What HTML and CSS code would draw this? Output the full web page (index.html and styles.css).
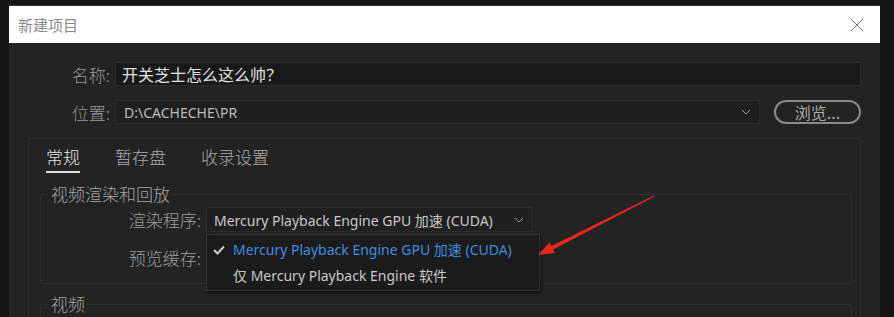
FILE: index.html
```html
<!DOCTYPE html>
<html lang="zh-CN">
<head>
    <meta charset="UTF-8">
    <title>新建项目</title>
    <link rel="stylesheet" href="styles.css">
</head>
<body>
    <div class="dialog">
        <div class="title-bar">
            <span class="title">新建项目</span>
            <svg class="close" width="14" height="14" viewBox="0 0 14 14">
                <path d="M1 1 L13 13 M13 1 L1 13" stroke="#777" stroke-width="1" fill="none"/>
            </svg>
        </div>

        <div class="content">
            <div class="row">
                <label class="label">名称:</label>
                <div class="text-input">开关芝士怎么这么帅？</div>
            </div>
            <div class="row">
                <label class="label">位置:</label>
                <div class="select path-select">
                    <span>D:\CACHECHE\PR</span>
                    <svg class="chev" width="10" height="6" viewBox="0 0 10 6"><path d="M1 1 L5 5 L9 1" stroke="#999" fill="none"/></svg>
                </div>
                <button class="browse">浏览...</button>
            </div>

            <div class="panel">
                <div class="tabs">
                    <span class="tab active">常规</span>
                    <span class="tab">暂存盘</span>
                    <span class="tab">收录设置</span>
                </div>

                <fieldset class="group">
                    <legend>视频渲染和回放</legend>
                    <div class="group-row">
                        <span class="group-label">渲染程序:</span>
                        <div class="select renderer">
                            <span>Mercury Playback Engine GPU 加速 (CUDA)</span>
                            <svg class="chev" width="10" height="6" viewBox="0 0 10 6"><path d="M1 1 L5 5 L9 1" stroke="#999" fill="none"/></svg>
                        </div>
                        <div class="menu">
                            <div class="menu-item selected">
                                <svg class="check" width="12" height="10" viewBox="0 0 12 10"><path d="M1 5 L4.5 8.5 L11 1.5" stroke="#ccc" stroke-width="2" fill="none"/></svg>
                                <span>Mercury Playback Engine GPU 加速 (CUDA)</span>
                            </div>
                            <div class="menu-item">
                                <span>仅 Mercury Playback Engine 软件</span>
                            </div>
                        </div>
                    </div>
                    <div class="group-row">
                        <span class="group-label">预览缓存:</span>
                    </div>
                </fieldset>

                <fieldset class="group">
                    <legend>视频</legend>
                </fieldset>
            </div>
        </div>

        <!-- 红色箭头标注 -->
        <svg class="arrow" width="140" height="75" viewBox="0 0 140 75">
            <path d="M11 68 L22.6 55.5 L24.4 59 L127 8.6 L127.4 9.4 L26.2 62.6 L28 66.1 Z" fill="#e8261c"/>
        </svg>
    </div>
</body>
</html>
```

FILE: styles.css
```css
body {
    margin: 0;
    background-color: #151515;
    font-family: "Noto Sans", "Noto Sans CJK SC", sans-serif;
    overflow: hidden;
}

.dialog {
    position: relative;
    margin-left: 9px;
    margin-top: 5px;
    width: 871px;
    height: 311px;
    overflow: hidden;
    background-color: #232323;
    border-top: 1px solid #333;
}

.title-bar {
    height: 37px;
    background-color: #fff;
    display: flex;
    align-items: center;
    justify-content: space-between;
    padding: 0 16px 0 9px;
}

.title {
    color: #8a8a8a;
    font-size: 15px;
    font-family: "Noto Sans CJK SC", sans-serif;
}

.content {
    padding: 19px 19px 0 0;
}

.row {
    display: flex;
    align-items: center;
    gap: 5px;
    height: 24px;
    margin-bottom: 14px;
}

.label {
    width: 101px;
    text-align: right;
    color: #979797;
    font-size: 17px;
    font-family: "Noto Sans CJK SC", sans-serif;
    font-weight: 300;
}

.text-input {
    flex: 1;
    height: 22px;
    line-height: 22px;
    background-color: #191919;
    border: 1px solid #2c2c2c;
    color: #e0e0e0;
    font-size: 16px;
    padding-left: 6px;
    font-family: "Noto Sans CJK SC", sans-serif;
}

.select {
    display: flex;
    align-items: center;
    justify-content: space-between;
    background-color: #1f1f1f;
    border: 1px solid #2c2c2c;
    color: #c8c8c8;
    font-size: 14px;
    padding: 0 8px 0 8px;
    box-sizing: border-box;
}

.path-select {
    width: 645px;
    height: 24px;
    color: #bbb;
}

.browse {
    margin-left: 9px;
    width: 87px;
    height: 24px;
    border: 2px solid #8a8a8a;
    border-radius: 12px;
    background-color: #232323;
    color: #a8a8a8;
    font-size: 16px;
    font-family: "Noto Sans CJK SC", sans-serif;
    padding: 0;
    line-height: 18px;
}

.panel {
    margin-left: 19px;
    border: 1px solid #2e2e2e;
    border-bottom: none;
    height: 200px;
    padding: 0 8px 0 11px;
}

.tabs {
    display: flex;
    gap: 35px;
    padding: 6px 0 0 6px;
    height: 40px;
    box-sizing: border-box;
}

.tab {
    color: #aaa;
    font-size: 17px;
    font-family: "Noto Sans CJK SC", sans-serif;
    font-weight: 300;
    line-height: 24px;
    height: 26px;
}

.tab.active {
    color: #e6e6e6;
    border-bottom: 2px solid #ddd;
}

.group {
    border: 1px solid #2f2f2f;
    border-radius: 3px;
    margin: 7px 0 0 0;
    padding: 5px 0 0 0;
    min-height: 88px;
    box-sizing: border-box;
}

.group + .group {
    margin-top: 12px;
}

.group legend {
    color: #a5a5a5;
    font-size: 17px;
    font-family: "Noto Sans CJK SC", sans-serif;
    font-weight: 300;
    padding: 0 3px;
    margin-left: 7px;
    line-height: 16px;
}

.group-row {
    position: relative;
    display: flex;
    align-items: center;
    gap: 5px;
    height: 25px;
    margin-bottom: 13px;
}

.group-label {
    width: 160px;
    text-align: right;
    color: #9e9e9e;
    font-size: 17px;
    font-family: "Noto Sans CJK SC", sans-serif;
    font-weight: 300;
}

.renderer {
    width: 326px;
    height: 25px;
    padding-left: 7px;
    padding-right: 7px;
}

.chev {
    flex-shrink: 0;
}

.menu {
    position: absolute;
    left: 165px;
    top: 27px;
    width: 334px;
    height: 57px;
    background-color: #1b1b1b;
    border: 1px solid #343434;
    box-shadow: 1px 2px 3px rgba(0, 0, 0, 0.6);
    box-sizing: border-box;
    z-index: 2;
    padding-top: 1px;
}

.menu-item {
    display: flex;
    align-items: center;
    height: 26px;
    padding-left: 26px;
    color: #c8c8c8;
    font-size: 14px;
    position: relative;
}

.menu-item.selected {
    color: #3d8ee0;
}

.check {
    position: absolute;
    left: 6px;
    top: 9px;
}

.arrow {
    position: absolute;
    left: 518px;
    top: 181px;
    z-index: 3;
}
```
